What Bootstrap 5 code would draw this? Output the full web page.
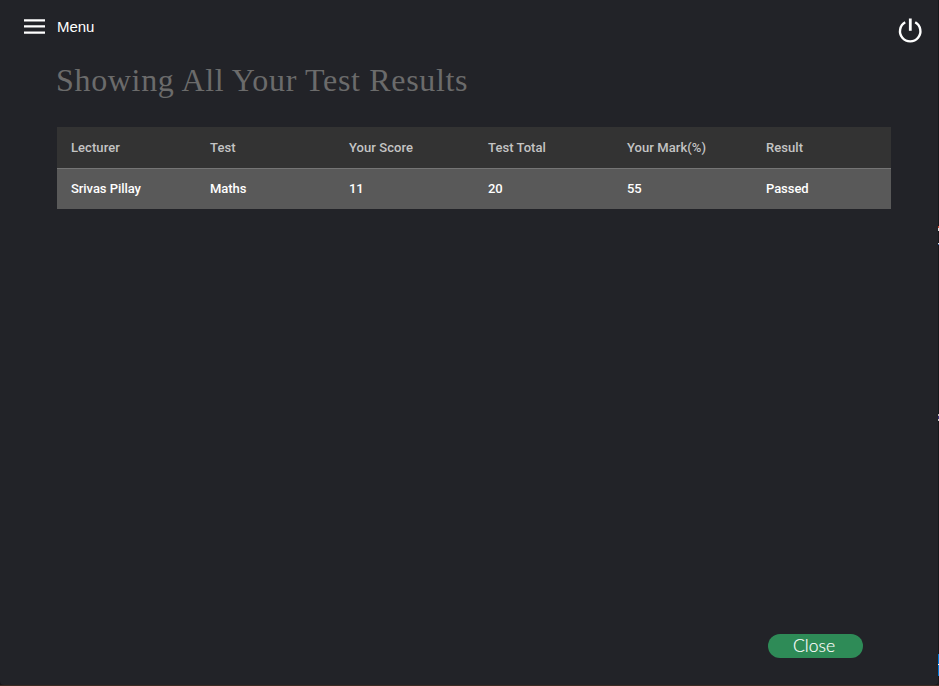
<!DOCTYPE html>
<html lang="en">
<head>
<meta charset="utf-8">
<meta name="viewport" content="width=device-width, initial-scale=1">
<title>Test Results</title>
<link href="https://cdn.jsdelivr.net/npm/bootstrap@5.3.0/dist/css/bootstrap.min.css" rel="stylesheet">
<style>
body { background: #17171b; font-family: Roboto, "Liberation Sans", sans-serif; }
.app-window { width: 938px; height: 685px; background: #222328; border-radius: 0 0 4px 4px; }
.desktop { height: 686px; border-bottom: 1px solid #3d2b22; }
.top-bar { height: 61px; padding: 19px 16px 0 24px; }
.menu-btn { font: 15px/16px "Liberation Sans", Arial, sans-serif; letter-spacing: -.1px; gap: 12px; color: #fff; }
.power-icon { margin-top: -1px; overflow: visible; }
.page-title { font: 400 32px/38px "Century", "Liberation Serif", serif; color: #6b6b6b; letter-spacing: .67px; margin: 0 0 28px -1px; white-space: nowrap; }
.content { padding: 0 47px 0 57px; }
.results { table-layout: fixed; width: 834px; font-size: 13px; line-height: 20px; font-weight: 500; }
.results > :not(caption) > * > * { padding: 10px 0 10px 14px; border: 0; box-shadow: none; }
.results thead th { height: 41px; background: #333; color: #c4c4c4; font-weight: 500; letter-spacing: .06px; }
.results tbody td { height: 41px; background: #595959; color: #fff; letter-spacing: -.06px; border-top: 1px solid #757575 !important; }
.close-btn { width: 95px; height: 24px; border-radius: 12px; background: #2e8b57; color: #fff; border: 0; padding: 0 3px 0 0; margin: 0 75px 27px 0; font: 300 17.5px/24px Lato, sans-serif; -webkit-text-stroke: .15px #fff; }
.edge { position: absolute; left: 938px; width: 1px; }
.edge-red { top: 226px; height: 5px; background: linear-gradient(#c8503c 40%, #ddd 40%); }
.edge-light { top: 243px; height: 2px; background: linear-gradient(#ddd 50%, #3465a4 50%); }
.edge-violet { top: 414px; height: 7px; background: linear-gradient(#bbb 28%, #392c70 28% 72%, #ccc 72%); }
.edge-blue { top: 654px; height: 22px; background: linear-gradient(#0078d7 45%, #fff 45% 50%, #0078d7 50%); }
</style>
</head>
<body>
<div class="desktop position-relative overflow-hidden">
  <main class="app-window d-flex flex-column">
    <header class="top-bar d-flex justify-content-between align-items-start">
      <button class="menu-btn btn p-0 border-0 d-flex align-items-start" type="button">
        <svg width="21" height="15" viewBox="0 0 21 15"><path d="M0 .2h21v2.2H0zM0 6.3h21v2.2H0zM0 12.5h21v2.2H0z" fill="#fff"/></svg>
        <span>Menu</span>
      </button>
      <svg class="power-icon" width="24" height="24" viewBox="0 0 24 24" fill="none" stroke="#fff" stroke-width="2.4" aria-label="Log out"><path d="M7.2 4.3A10.2 10.2 0 1 0 17.2 4.3"/><path d="M12.3 0.5v12.3" stroke-width="2.8"/></svg>
    </header>
    <section class="content">
      <h1 class="page-title">Showing All Your Test Results</h1>
      <table class="table results mb-0">
        <colgroup><col style="width:139px"><col style="width:139px"><col style="width:139px"><col style="width:139px"><col style="width:139px"><col style="width:139px"></colgroup>
        <thead><tr><th>Lecturer</th><th>Test</th><th>Your Score</th><th>Test Total</th><th>Your Mark(%)</th><th>Result</th></tr></thead>
        <tbody><tr><td>Srivas Pillay</td><td>Maths</td><td>11</td><td>20</td><td>55</td><td>Passed</td></tr></tbody>
      </table>
    </section>
    <footer class="mt-auto d-flex justify-content-end">
      <button class="close-btn btn" type="button">Close</button>
    </footer>
  </main>
  <span class="edge edge-red"></span>
  <span class="edge edge-light"></span>
  <span class="edge edge-violet"></span>
  <span class="edge edge-blue"></span>
</div>
<script src="https://cdn.jsdelivr.net/npm/bootstrap@5.3.0/dist/js/bootstrap.bundle.min.js"></script>
</body>
</html>
